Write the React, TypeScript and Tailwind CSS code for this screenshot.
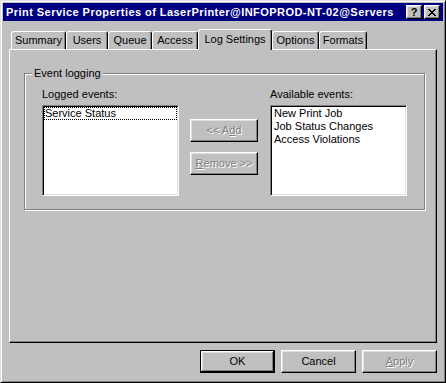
import React from "react";

const raised =
  "border border-t-white border-l-white border-r-black border-b-black shadow-[inset_-1px_-1px_0_#808080,inset_1px_1px_0_#dfdfdf]";

function CloseGlyph() {
  const rows = ["11000011", "01100110", "00111100", "00011000", "00111100", "01100110", "11000011"];
  const rects: React.ReactElement[] = [];
  rows.forEach((r, y) =>
    r.split("").forEach((c, x) => {
      if (c === "1") rects.push(<rect key={`${x}-${y}`} x={x} y={y} width={1} height={1} fill="#000" />);
    })
  );
  return (
    <svg width="8" height="7" viewBox="0 0 8 7" shapeRendering="crispEdges">
      {rects}
    </svg>
  );
}

function Tab({ label, w, active }: { label: string; w: string; active?: boolean }) {
  return (
    <div
      className={
        "flex items-center justify-center border-l border-t border-r border-l-white border-t-white border-r-black rounded-tl-[3px] rounded-tr-[3px] shadow-[inset_-1px_0_0_#808080] bg-[#c0c0c0] " +
        w +
        (active ? " h-[21px] -mb-px relative z-10 pb-[2px]" : " h-[18px]")
      }
    >
      <span className="leading-[13px]">{label}</span>
    </div>
  );
}

function Btn({
  children,
  w,
  disabled,
  isDefault,
}: {
  children: React.ReactNode;
  w: string;
  disabled?: boolean;
  isDefault?: boolean;
}) {
  const bevel = isDefault
    ? "border border-black shadow-[inset_-1px_-1px_0_#000,inset_1px_1px_0_#fff,inset_-2px_-2px_0_#808080,inset_2px_2px_0_#dfdfdf]"
    : raised;
  return (
    <div
      className={
        "h-[23px] flex items-center justify-center bg-[#c0c0c0] " +
        w +
        " " +
        bevel +
        (disabled ? " text-[#808080] [text-shadow:1px_1px_0_#fff]" : " text-black")
      }
    >
      <span className="leading-[13px]">{children}</span>
    </div>
  );
}

export default function App() {
  return (
    <div className="w-[446px] h-[383px] bg-[#c0c0c0] text-[11px] text-black font-['Liberation_Sans',Arial,sans-serif]">
      <div className="w-full h-full flex flex-col p-[2px] border border-t-[#dfdfdf] border-l-[#dfdfdf] border-r-black border-b-black shadow-[inset_1px_1px_0_#fff,inset_-1px_-1px_0_#808080]">
        {/* Title bar */}
        <div className="h-[18px] bg-[#000080] flex items-center pl-[3px] pr-[3px]">
          <span className="flex-1 text-white font-bold text-[11px] tracking-[0.45px] leading-[14px] whitespace-nowrap">
            Print Service Properties of LaserPrinter@INFOPROD-NT-02@Servers
          </span>
          <div className={"w-[16px] h-[14px] flex items-center justify-center bg-[#c0c0c0] " + raised}>
            <span className="font-bold text-[11px] leading-[10px] text-black">?</span>
          </div>
          <div className={"ml-[2px] w-[16px] h-[14px] flex items-center justify-center bg-[#c0c0c0] " + raised}>
            <CloseGlyph />
          </div>
        </div>

        {/* Tabs */}
        <div className="mt-[8px] mx-[6px] flex flex-col">
          <div className="flex items-end h-[20px] pl-[2px]">
            <Tab label="Summary" w="w-[55px]" />
            <Tab label="Users" w="w-[42px]" />
            <Tab label="Queue" w="w-[44px]" />
            <Tab label="Access" w="w-[46px]" />
            <Tab label="Log Settings" w="w-[74px]" active />
            <Tab label="Options" w="w-[47px]" />
            <Tab label="Formats" w="w-[48px]" />
          </div>

          {/* Panel */}
          <div className="h-[294px] border border-t-white border-l-white border-r-black border-b-black shadow-[inset_-1px_-1px_0_#808080] pt-[23px] pl-[14px]">
            {/* Group box */}
            <div className="relative w-[401px] h-[137px] border border-[#808080] shadow-[1px_1px_0_#fff,inset_1px_1px_0_#fff] pt-[14px] pl-[17px] flex">
              <div className="absolute left-[7px] top-[-8px] px-[2px] bg-[#c0c0c0] leading-[14px]">Event logging</div>

              {/* Left column */}
              <div className="flex flex-col w-[137px]">
                <div className="h-[13px] leading-[13px]">Logged events:</div>
                <div className="mt-[4px] w-[137px] h-[91px] bg-white p-px border border-t-[#808080] border-l-[#808080] border-r-white border-b-white shadow-[inset_1px_1px_0_#000,inset_-1px_-1px_0_#dfdfdf]">
                  <div className="h-[13px] leading-[11px] border border-dotted border-black whitespace-nowrap">
                    Service Status
                  </div>
                </div>
              </div>

              {/* Middle buttons */}
              <div className="ml-[11px] mt-[31px] flex flex-col gap-[10px]">
                <Btn w="w-[68px]" disabled>
                  {"<< A"}
                  <u>d</u>
                  {"d"}
                </Btn>
                <Btn w="w-[68px]" disabled>
                  <u>R</u>
                  {"emove >>"}
                </Btn>
              </div>

              {/* Right column */}
              <div className="ml-[12px] flex flex-col w-[137px]">
                <div className="h-[13px] leading-[13px]">Available events:</div>
                <div className="mt-[4px] w-[137px] h-[91px] bg-white p-px border border-t-[#808080] border-l-[#808080] border-r-white border-b-white shadow-[inset_1px_1px_0_#000,inset_-1px_-1px_0_#dfdfdf]">
                  <div className="h-[13px] leading-[13px] pl-[2px] whitespace-nowrap">New Print Job</div>
                  <div className="h-[13px] leading-[13px] pl-[2px] whitespace-nowrap">Job Status Changes</div>
                  <div className="h-[13px] leading-[13px] pl-[2px] whitespace-nowrap">Access Violations</div>
                </div>
              </div>
            </div>
          </div>
        </div>

        {/* Bottom buttons */}
        <div className="mt-[7px] flex justify-end gap-[6px] pr-[6px]">
          <Btn w="w-[75px]" isDefault>
            OK
          </Btn>
          <Btn w="w-[75px]">Cancel</Btn>
          <Btn w="w-[75px]" disabled>
            <u>A</u>
            {"pply"}
          </Btn>
        </div>
      </div>
    </div>
  );
}
